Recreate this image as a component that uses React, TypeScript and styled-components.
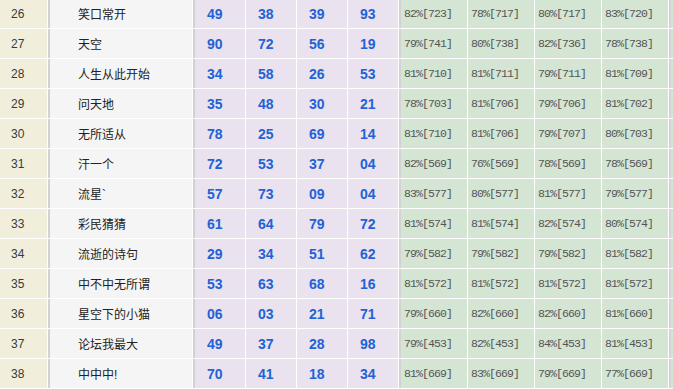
import React from "react";
import styled, { createGlobalStyle } from "styled-components";

const GlobalStyle = createGlobalStyle`
  html, body {
    margin: 0;
    padding: 0;
    background: #ffffff;
    overflow: hidden;
  }
`;

const Table = styled.div`
  display: flex;
  flex-direction: column;
  gap: 1px;
  margin-top: -1px;
  background: #ffffff;
`;

const Row = styled.div`
  display: grid;
  grid-template-columns: 47px 144px 52px 50px 50px 50px 68px 66px 66px 66px 1fr;
  column-gap: 1px;
  height: 29px;
`;

const Cell = styled.div<{ $lead?: boolean }>`
  display: flex;
  align-items: center;
  box-sizing: border-box;
  border-left: ${(p) => (p.$lead ? "2px solid #d2d2d2" : "none")};
  white-space: nowrap;
  overflow: hidden;
`;

const RankCell = styled(Cell)`
  background: #f1efdc;
  padding-left: 11px;
  font-family: "Liberation Sans", Arial, sans-serif;
  font-size: 12px;
  color: #3a3a3a;
`;

const NameCell = styled(Cell)`
  background: #f5f5f5;
  padding-left: 28px;
  font-family: "Liberation Sans", "Noto Sans CJK SC", sans-serif;
  font-size: 12px;
  color: #222222;
`;

const NumCell = styled(Cell)`
  background: #eae2ee;
  padding-left: 12px;
  font-family: "Liberation Sans", Arial, sans-serif;
  font-weight: bold;
  font-size: 14px;
  color: #2162d6;
`;

const RateCell = styled(Cell)`
  background: #d4e5d4;
  padding-left: 3px;
  font-family: "Liberation Mono", monospace;
  font-size: 11.5px;
  letter-spacing: -0.9px;
  color: #555555;
`;

type Entry = {
  rank: number;
  name: string;
  nums: string[];
  rates: string[];
};

const rows: Entry[] = [
  { rank: 26, name: "笑口常开", nums: ["49", "38", "39", "93"], rates: ["82%[723]", "78%[717]", "80%[717]", "83%[720]"] },
  { rank: 27, name: "天空", nums: ["90", "72", "56", "19"], rates: ["79%[741]", "80%[738]", "82%[736]", "78%[738]"] },
  { rank: 28, name: "人生从此开始", nums: ["34", "58", "26", "53"], rates: ["81%[710]", "81%[711]", "79%[711]", "81%[709]"] },
  { rank: 29, name: "问天地", nums: ["35", "48", "30", "21"], rates: ["78%[703]", "81%[706]", "79%[706]", "81%[702]"] },
  { rank: 30, name: "无所适从", nums: ["78", "25", "69", "14"], rates: ["81%[710]", "81%[706]", "79%[707]", "80%[703]"] },
  { rank: 31, name: "汗一个", nums: ["72", "53", "37", "04"], rates: ["82%[569]", "76%[569]", "78%[569]", "78%[569]"] },
  { rank: 32, name: "流星`", nums: ["57", "73", "09", "04"], rates: ["83%[577]", "80%[577]", "81%[577]", "79%[577]"] },
  { rank: 33, name: "彩民猜猜", nums: ["61", "64", "79", "72"], rates: ["81%[574]", "81%[574]", "82%[574]", "80%[574]"] },
  { rank: 34, name: "流逝的诗句", nums: ["29", "34", "51", "62"], rates: ["79%[582]", "79%[582]", "79%[582]", "81%[582]"] },
  { rank: 35, name: "中不中无所谓", nums: ["53", "63", "68", "16"], rates: ["81%[572]", "81%[572]", "81%[572]", "81%[572]"] },
  { rank: 36, name: "星空下的小猫", nums: ["06", "03", "21", "71"], rates: ["79%[660]", "82%[660]", "82%[660]", "81%[660]"] },
  { rank: 37, name: "论坛我最大", nums: ["49", "37", "28", "98"], rates: ["79%[453]", "82%[453]", "84%[453]", "81%[453]"] },
  { rank: 38, name: "中中中!", nums: ["70", "41", "18", "34"], rates: ["81%[669]", "83%[669]", "79%[669]", "77%[669]"] },
];

export default function App() {
  return (
    <>
      <GlobalStyle />
      <Table>
        {rows.map((r) => (
          <Row key={r.rank}>
            <RankCell>{r.rank}</RankCell>
            <NameCell $lead>{r.name}</NameCell>
            {r.nums.map((n, i) => (
              <NumCell key={i} $lead={i === 0}>
                {n}
              </NumCell>
            ))}
            {r.rates.map((v, i) => (
              <RateCell key={i} $lead={i === 0}>
                {v}
              </RateCell>
            ))}
            <RateCell $lead />
          </Row>
        ))}
      </Table>
    </>
  );
}
